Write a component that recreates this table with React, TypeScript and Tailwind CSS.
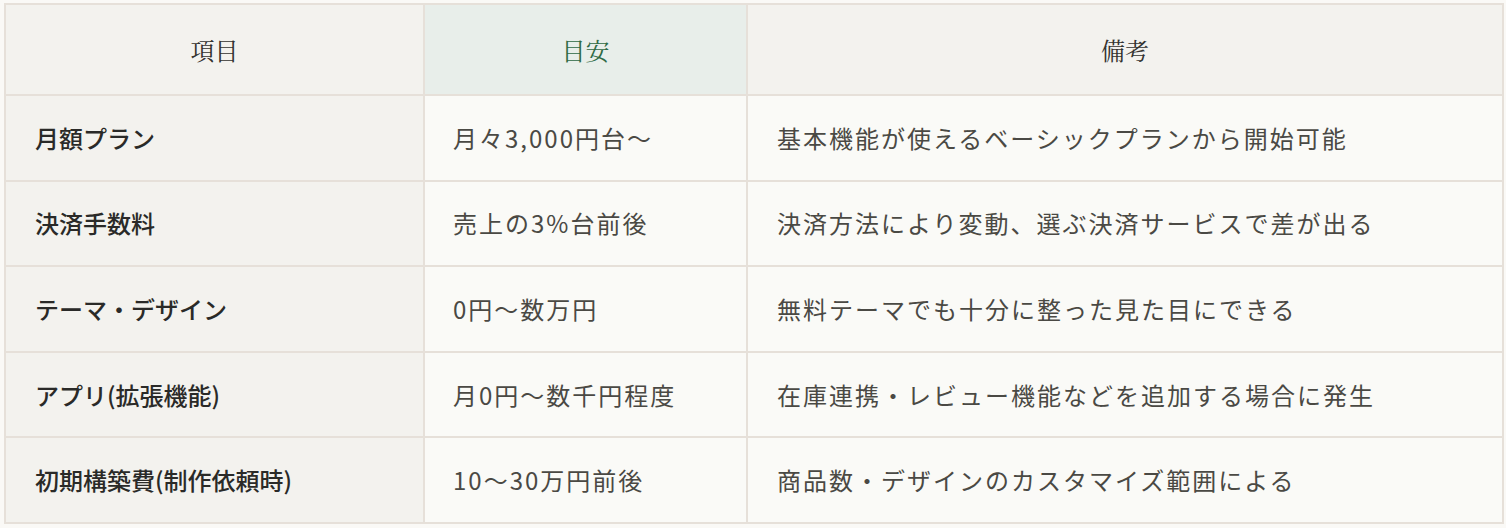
import React from "react";

const rows: [string, string, string][] = [
  ["月額プラン", "月々3,000円台〜", "基本機能が使えるベーシックプランから開始可能"],
  ["決済手数料", "売上の3%台前後", "決済方法により変動、選ぶ決済サービスで差が出る"],
  ["テーマ・デザイン", "0円〜数万円", "無料テーマでも十分に整った見た目にできる"],
  ["アプリ(拡張機能)", "月0円〜数千円程度", "在庫連携・レビュー機能などを追加する場合に発生"],
  ["初期構築費(制作依頼時)", "10〜30万円前後", "商品数・デザインのカスタマイズ範囲による"],
];

const sans = "font-['Noto_Sans_CJK_JP','Noto_Sans',sans-serif]";

export default function App() {
  return (
    <div lang="ja" className="w-[1506px] h-[528px] bg-[#faf9f6] pl-[4px] pt-[3px]">
      <div className="grid w-[1500px] grid-cols-[417px_321px_754px] gap-[2px] bg-[#e6e0d9] p-[2px]">
        <div className="h-[89px] bg-[#f3f2ee] flex items-center justify-center text-[24px] text-[#333330] font-['Noto_Serif_CJK_JP','Liberation_Serif',serif]">
          項目
        </div>
        <div className="h-[89px] bg-[#e8eeea] flex items-center justify-center text-[24px] text-[#2f6a45] font-['Noto_Serif_CJK_JP','Liberation_Serif',serif]">
          目安
        </div>
        <div className="h-[89px] bg-[#f3f2ee] flex items-center justify-center text-[24px] text-[#333330] font-['Noto_Serif_CJK_JP','Liberation_Serif',serif]">
          備考
        </div>
        {rows.map(([a, b, c]) => (
          <React.Fragment key={a}>
            <div className={`h-[83.6px] bg-[#f3f2ee] flex items-center pl-[29px] text-[24px] font-medium text-[#2a2a28] ${sans}`}>
              {a}
            </div>
            <div className={`h-[83.6px] bg-[#fafaf7] flex items-center pl-[28px] text-[24px] tracking-[2px] text-[#4a4944] ${sans}`}>
              {b}
            </div>
            <div className={`h-[83.6px] bg-[#fafaf7] flex items-center pl-[29px] text-[24px] tracking-[2px] text-[#4a4944] ${sans}`}>
              {c}
            </div>
          </React.Fragment>
        ))}
      </div>
    </div>
  );
}
